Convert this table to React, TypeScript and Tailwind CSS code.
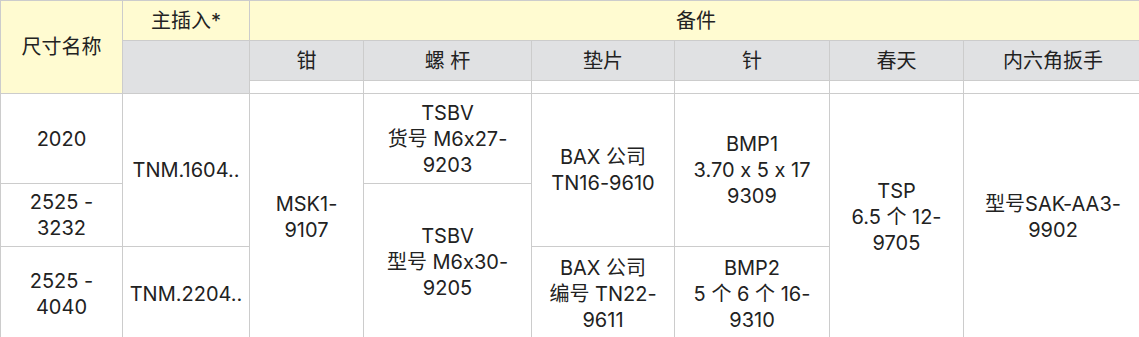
import React from "react";

const cell = "border border-[#cccccc] p-0 text-center align-middle";
const yellow = "bg-[#fffbd1]";
const gray = "bg-[#e0e1e3]";

function Lines({ items }: { items: string[] }) {
  return (
    <>
      {items.map((t, i) => (
        <div key={i} className="whitespace-nowrap">
          {t}
        </div>
      ))}
    </>
  );
}

export default function App() {
  return (
    <div className="w-[1139px] h-[337px] overflow-hidden bg-white font-['Inter','Noto_Sans_CJK_SC',sans-serif] [font-feature-settings:'calt'_0] text-[20px] leading-[26px] text-[#222222]">
      <table className="table-fixed border-collapse w-[1142px]">
        <colgroup>
          <col className="w-[122px]" />
          <col className="w-[127px]" />
          <col className="w-[114px]" />
          <col className="w-[168px]" />
          <col className="w-[143px]" />
          <col className="w-[155px]" />
          <col className="w-[134px]" />
          <col className="w-[179px]" />
        </colgroup>
        <thead>
          <tr className="h-[40px]">
            <th rowSpan={3} className={`${cell} ${yellow} font-normal`}>
              尺寸名称
            </th>
            <th className={`${cell} ${yellow} font-normal`}>主插入*</th>
            <th colSpan={6} className={`${cell} ${yellow} font-normal`}>
              备件
            </th>
          </tr>
          <tr className="h-[40px]">
            <th rowSpan={2} className={`${cell} ${gray}`}></th>
            <th className={`${cell} ${gray} font-normal`}>钳</th>
            <th className={`${cell} ${gray} font-normal`}>螺 杆</th>
            <th className={`${cell} ${gray} font-normal`}>垫片</th>
            <th className={`${cell} ${gray} font-normal`}>针</th>
            <th className={`${cell} ${gray} font-normal`}>春天</th>
            <th className={`${cell} ${gray} font-normal`}>内六角扳手</th>
          </tr>
          <tr className="h-[13px]">
            <td className={cell}></td>
            <td className={cell}></td>
            <td className={cell}></td>
            <td className={cell}></td>
            <td className={cell}></td>
            <td className={cell}></td>
          </tr>
        </thead>
        <tbody>
          <tr className="h-[90px]">
            <td className={cell}>2020</td>
            <td rowSpan={2} className={cell}>
              TNM.1604..
            </td>
            <td rowSpan={3} className={cell}>
              <Lines items={["MSK1-", "9107"]} />
            </td>
            <td className={cell}>
              <Lines items={["TSBV", "货号 M6x27-", "9203"]} />
            </td>
            <td rowSpan={2} className={cell}>
              <Lines items={["BAX 公司", "TN16-9610"]} />
            </td>
            <td rowSpan={2} className={cell}>
              <Lines items={["BMP1", "3.70 x 5 x 17", "9309"]} />
            </td>
            <td rowSpan={3} className={cell}>
              <Lines items={["TSP", "6.5 个 12-", "9705"]} />
            </td>
            <td rowSpan={3} className={cell}>
              <Lines items={["型号SAK-AA3-", "9902"]} />
            </td>
          </tr>
          <tr className="h-[63px]">
            <td className={cell}>
              <Lines items={["2525 -", "3232"]} />
            </td>
            <td rowSpan={2} className={cell}>
              <Lines items={["TSBV", "型号 M6x30-", "9205"]} />
            </td>
          </tr>
          <tr className="h-[94px]">
            <td className={cell}>
              <Lines items={["2525 -", "4040"]} />
            </td>
            <td className={cell}>TNM.2204..</td>
            <td className={cell}>
              <Lines items={["BAX 公司", "编号 TN22-", "9611"]} />
            </td>
            <td className={cell}>
              <Lines items={["BMP2", "5 个 6 个 16-", "9310"]} />
            </td>
          </tr>
        </tbody>
      </table>
    </div>
  );
}
